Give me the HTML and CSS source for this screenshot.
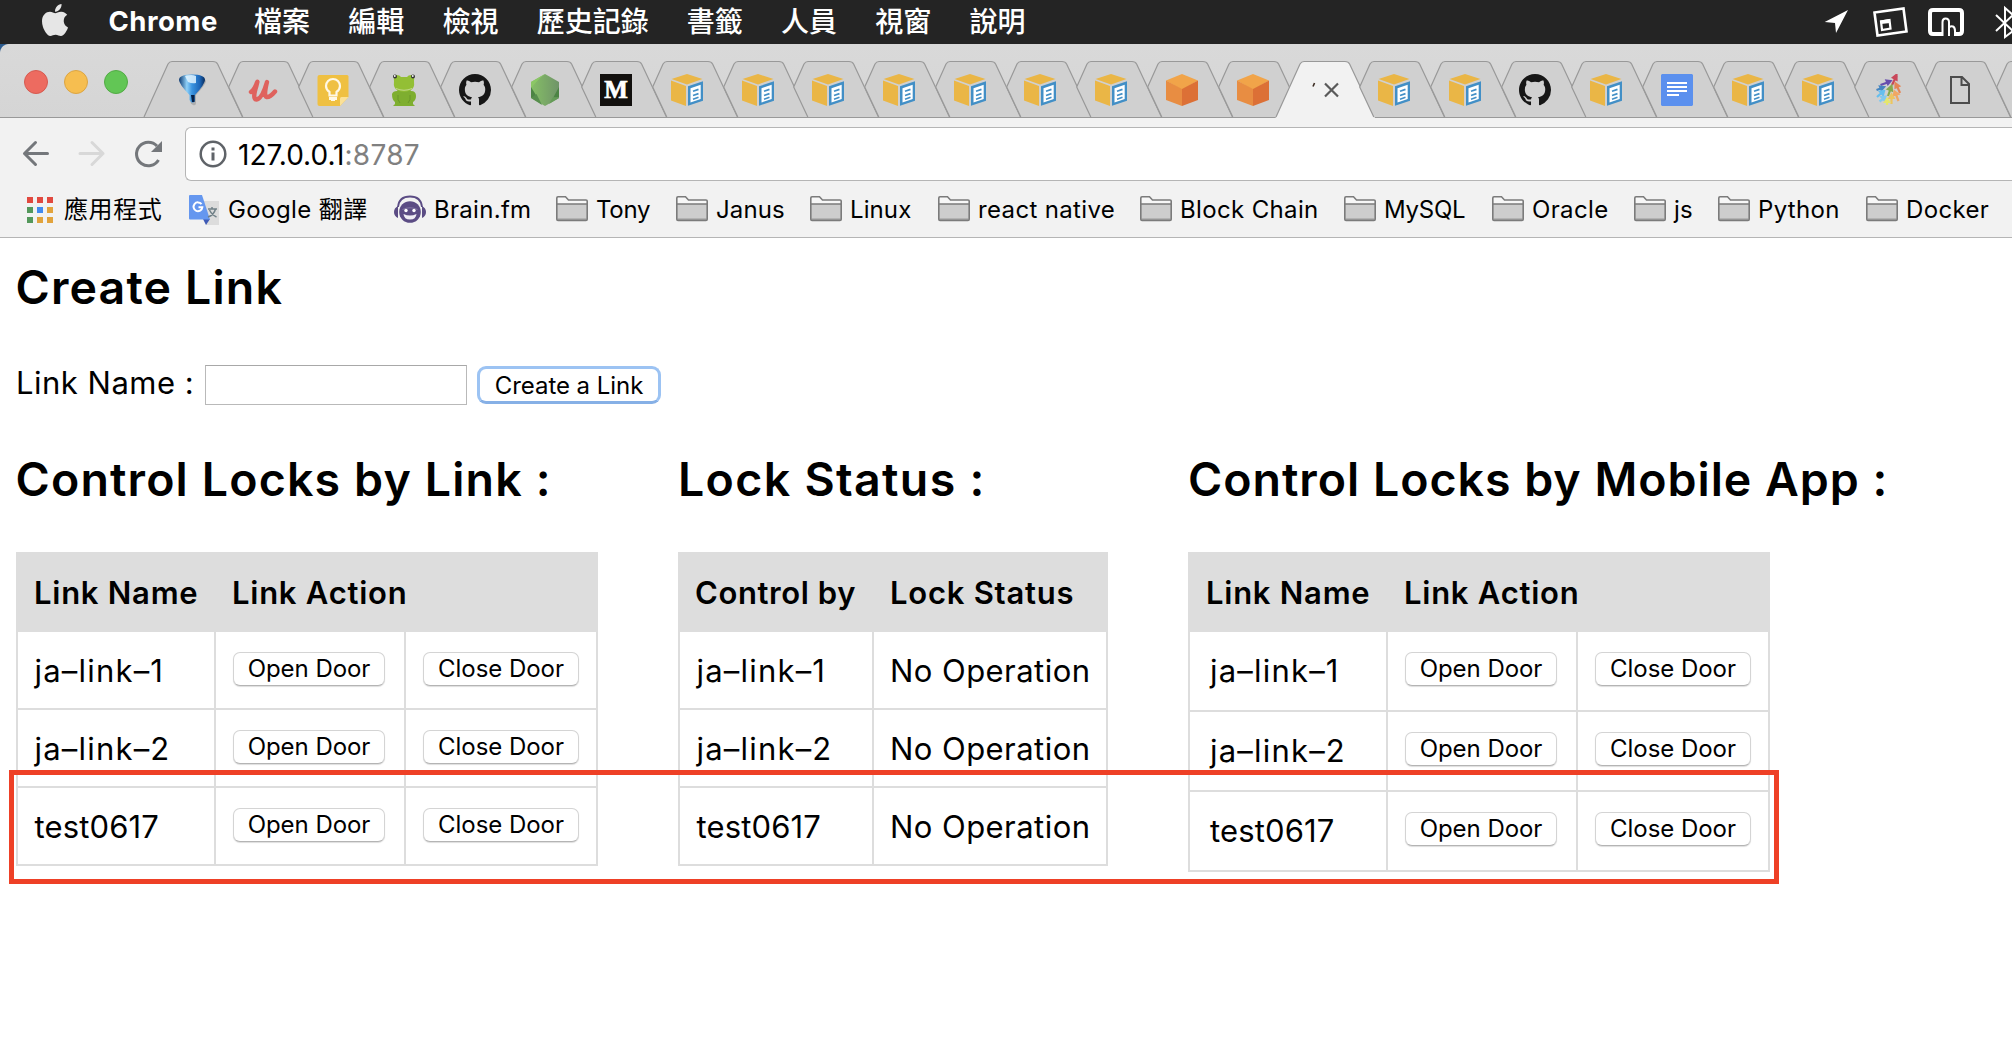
FILE: index.html
```html
<!DOCTYPE html>
<html lang="zh-Hant">
<head>
<meta charset="utf-8">
<title>Create Link</title>
<link rel="stylesheet" href="styles.css">
</head>
<body>
<svg class="defs" aria-hidden="true">
  <defs>
    <linearGradient id="blue" x1="0" x2="1"><stop offset="0" stop-color="#0d3a72"/><stop offset=".3" stop-color="#8fd0f7"/><stop offset=".5" stop-color="#3a94e0"/><stop offset=".8" stop-color="#1c66b8"/><stop offset="1" stop-color="#082c5c"/></linearGradient>
    <linearGradient id="node" x1="0" x2="1"><stop offset="0" stop-color="#86bf66"/><stop offset="1" stop-color="#6f9468"/></linearGradient>
    <symbol id="tab" viewBox="0 0 71 57" overflow="visible"><path class="tab-fill" d="M.7 26 L11 3 Q12.5 .5 15 .5 H56 Q59.3 .5 60.6 3 L85.5 56 H14.8Z"/><path class="tab-line" d="M14.8 56 L.7 26 L11 3 Q12.5 .5 15 .5 H56 Q59.3 .5 60.6 3 L85.5 56"/></symbol>
    <symbol id="tab-full" viewBox="0 0 71 57" overflow="visible"><path class="tab-fill" d="M-13 56 L11 3 Q12.5 .5 15 .5 H56 Q59.3 .5 60.6 3 L85.5 56Z"/><path class="tab-line" d="M-13 56 L11 3 Q12.5 .5 15 .5 H56 Q59.3 .5 60.6 3 L85.5 56"/></symbol>
    <symbol id="tab-active" viewBox="0 0 71 57" overflow="visible"><path fill="#f2f2f2" d="M-13.500 57 L11 3 Q12.5 .5 15 .5 H56 Q59.3 .5 60.6 3 L86 57Z"/><path class="tab-line" d="M-13 56 L11 3 Q12.5 .5 15 .5 H56 Q59.3 .5 60.6 3 L85.5 56"/></symbol>
    <symbol id="funnel" viewBox="0 0 32 32"><path d="M4 6 Q4 1.500 16 1.500 T29 6 Q29 9 19 20 V28 Q19 31 16 30 Q13.500 29 13.500 27 V20 Q4 9 4 6Z" fill="#8b8b8b" opacity=".5" transform="translate(1 1)"/><path d="M3 6 Q3 .5 16 .5 T29 6 Q29 10 19 21 V27 Q17.500 29.500 15 28 L13.500 26 V21 Q3 10 3 6Z" fill="url(#blue)"/><path d="M9 2 Q16 0 20 2 L20 9 Q16 10 12 8Z" fill="#e3f4ff" opacity=".85"/><path d="M15 21 h3.500 v7 h-2.500Z" fill="#061f45"/></symbol>
    <symbol id="script-u" viewBox="0 0 32 32"><path d="M4 18 Q8 15 10 8.500 Q11 6 9.500 11.500 Q5 25.500 9.500 25.500 Q15 25 20 8 Q16.500 22 19.500 23 Q23 23.500 28 17.500" fill="none" stroke="#df625d" stroke-width="4.400" stroke-linecap="round" stroke-linejoin="round"/></symbol>
    <symbol id="keep" viewBox="0 0 32 32"><path d="M2.500 1 H30 Q31.500 1 31.500 2.500 V23 L23 32 H2.500 Q.5 32 .5 30 V3 Q.5 1 2.500 1Z" fill="#efc042"/><path d="M23 32 V24.500 Q23 23 24.500 23 H31.500Z" fill="#fbe198"/><path d="M12.500 21.500 V18 Q9 15.500 9 12 A7 7 0 0 1 23 12 Q23 15.500 19.500 18 V21.500Z" fill="none" stroke="#fff8e6" stroke-width="2.200"/><path d="M12 23 h8 v3 h-2 v1 h-4 v-1 h-2Z" fill="#fff8e6"/></symbol>
    <symbol id="frog" viewBox="0 0 32 32"><path d="M4 20 Q5 17 9 17 L11 14 H21 L23 17 Q28 17 28 22 Q28 26 25 28 V30 L27 32 H5 L7 30 V28 Q4 26 4 20Z" fill="#7eae2f"/><path d="M6 7 Q5 1 8.500 1 T13 3 H19 Q20 1 23.500 1 T26 7 Q27 15 22 16.500 Q16 19 10 16.500 Q5 15 6 7Z" fill="#93bf35"/><path d="M8 14.500 Q16 18 24 14.500" fill="none" stroke="#c4d98e"/><circle cx="7" cy="2.500" r="2" fill="#333"/><circle cx="25" cy="2.500" r="2" fill="#333"/><circle cx="6.800" cy="2" r=".9" fill="#fff"/><circle cx="24.800" cy="2" r=".9" fill="#fff"/><path d="M10 21 Q9 26 12 29 M22 21 Q23 26 20 29" fill="none" stroke="#6a962a"/></symbol>
    <symbol id="github" viewBox="0 0 16 16"><path fill="#161616" d="M8 0C3.580 0 0 3.580 0 8c0 3.540 2.290 6.530 5.470 7.590.4.070.55-.17.55-.38 0-.19-.010-.82-.010-1.490-2.010.37-2.530-.49-2.690-.94-.090-.23-.48-.94-.82-1.130-.28-.15-.68-.52-.010-.53.63-.010 1.080.58 1.230.82.72 1.210 1.870.87 2.330.66.070-.52.28-.87.510-1.070-1.780-.2-3.640-.89-3.640-3.950 0-.87.310-1.590.82-2.150-.080-.2-.36-1.020.080-2.120 0 0 .67-.210 2.200.82.64-.18 1.320-.27 2-.27s1.360.090 2 .27c1.530-1.040 2.200-.82 2.200-.82.44 1.100.16 1.920.080 2.120.510.56.82 1.270.82 2.150 0 3.070-1.870 3.750-3.650 3.950.29.25.54.73.54 1.480 0 1.070-.010 1.930-.010 2.200 0 .210.15.46.55.38A8.010 8.010 0 0 0 16 8c0-4.420-3.580-8-8-8z"/></symbol>
    <symbol id="hex" viewBox="0 0 32 32"><path d="M16 0 L30 8 V24 L16 32 L2 24 V8Z" fill="url(#node)"/><path d="M16 0 L2 8 V14 L11 4Z" fill="#8bc765"/><path d="M2 13 L7.500 22 L2 24Z M30 13 L24 24 L30 23Z" fill="#4c8444"/><path d="M7.500 20 L13 31 L2 24Z" fill="#578e4d"/><path d="M24 23 L30 24 L20 30Z" fill="#659c58"/></symbol>
    <symbol id="awsdoc" viewBox="0 0 32 32"><path d="M16 0 L31.500 5 L16 10.500 L.5 5Z" fill="#eab646"/><path d="M0 6.500 L15 12 V32 L0 26.500Z" fill="#eab646"/><path d="M17 12.300 L32 7.300 V26.700 L17 31.700Z" fill="#428fc6"/><path d="M19.500 14.200 L29.700 10.700 V25 L19.500 28.500Z" fill="#fff"/><path d="M22 17.300 L27.500 15.400 M22 21.500 L27.500 19.600 M22 25.200 L27.500 23.300" stroke="#428fc6" stroke-width="1.700"/></symbol>
    <symbol id="awscube" viewBox="0 0 32 32"><path d="M16 0 L32 6.500 L16 16 L0 6.500Z" fill="#f1a449"/><path d="M0 6.500 L16 15 V32 L0 26Z" fill="#e88d42"/><path d="M32 6.500 L16 15 V32 L32 26Z" fill="#dc7036"/></symbol>
    <symbol id="gdoc" viewBox="0 0 32 32"><path d="M1 0 H31 L32 1 V31 L31 32 H1 L0 31 V1Z" fill="#5b90ee"/><path d="M6 9 H26 M6 13 H26 M6 17 H26 M6 21 H18" stroke="#fff" stroke-width="1.900"/></symbol>
    <symbol id="arrows" viewBox="0 0 32 32">
      <g stroke-width="2.200" fill="none" transform="translate(5 0)"><g stroke="#c9475a"><path d="M14 11 L18.500 2"/><path fill="#c9475a" d="M15 3.500 L18.500 .8 V5.500Z"/></g><g stroke="#674cae"><path d="M2.500 11 L11 8"/><path fill="#674cae" d="M8.500 6.500 L12.500 7 L10 10Z"/></g><g stroke="#4585c0"><path d="M-1.500 16 L4 14"/><path fill="#4585c0" d="M2 12.500 L6 13 L3.500 16Z"/></g><g stroke="#66bfee"><path d="M-1 23 L4 18.500"/><path fill="#66bfee" d="M2 17.500 L6 17 L5 21Z"/></g><g stroke="#83c9ee"><path d="M1.500 27.500 L5.500 24.500"/><path fill="#83c9ee" d="M3.500 23 L7.500 22.500 L6.500 26.500Z"/></g><g stroke="#85ab4e"><path d="M10 22 L12.500 15"/><path fill="#85ab4e" d="M10 15 L13.500 12 L14 16.500Z"/></g><g stroke="#e48556"><path d="M22 19 L19 12"/><path fill="#e48556" d="M17.500 13.500 L17.500 9.500 L21 12Z"/></g><g stroke="#f0a763"><path d="M20.500 27 L18 20.500"/><path fill="#f0a763" d="M16 21 L16.500 17.500 L20 20Z"/></g><g stroke="#edc461"><path d="M13.500 30 V24"/><path fill="#edc461" d="M11.500 24 L13.500 20.500 L15.500 24Z"/></g><g stroke="#e5e66f"><path d="M9 31 V28"/><path fill="#e5e66f" d="M7 28 L9 25 L11 28Z"/></g></g></symbol>
    <symbol id="page" viewBox="0 0 32 32"><path d="M7 3 H18 L25 10 V29 H7Z M17.500 3 V11 H25" fill="none" stroke="#4c4c4c" stroke-width="2"/></symbol>
    <symbol id="folder" viewBox="0 0 32 26"><path d="M1 8 V2 Q1 1 2 1 H9.500 L12.500 4 H30 Q31 4 31 5 V8Z" fill="#f7f7f7"/><path d="M1 8 H31 V23.500 Q31 24.500 30 24.500 H2 Q1 24.500 1 23.500Z" fill="#cdcdcd"/><path d="M1.500 22 H30.500 V24 H1.500Z" fill="#b3b3b3"/><path d="M.8 8 H31.200 M.8 2 Q.8 .8 2 .8 H9.500 L12.500 4 H30 Q31.200 4 31.200 5 V23.200 Q31.200 24.400 30 24.400 H2 Q.8 24.400 .8 23.200Z" fill="none" stroke="#7b7b7b" stroke-width="1.600"/></symbol>
  </defs>
</svg>

<header class="menubar">
  <svg class="apple" viewBox="4 32 376 448" preserveAspectRatio="none"><path fill="#e6e6e6" d="M318.700 268.700c-.2-36.700 16.400-64.400 50-84.800-18.800-26.900-47.200-41.700-84.700-44.600-35.500-2.800-74.300 20.700-88.500 20.700-15 0-49.400-19.700-76.400-19.700C63.300 141.200 4 184.800 4 273.500q0 39.300 14.400 81.200c12.800 36.700 59 126.700 107.200 125.200 25.200-.6 43-17.900 75.800-17.900 31.800 0 48.300 17.900 76.400 17.900 48.600-.7 90.400-82.500 102.600-119.300-65.200-30.700-61.700-90-61.700-91.900zm-56.600-164.200c27.300-32.400 24.800-61.900 24-72.500-24.100 1.400-52 16.400-67.900 34.900-17.500 19.800-27.800 44.300-25.600 71.900 26.100 2 49.900-11.400 69.500-34.300z"/></svg>
  <nav class="menus"><b class="app">Chrome</b><span>檔案</span><span>編輯</span><span>檢視</span><span>歷史記錄</span><span>書籤</span><span>人員</span><span>視窗</span><span>說明</span></nav>
  <svg class="status" viewBox="0 0 188 44" fill="none" stroke="#fff">
    <path d="M24 10 L12 33 L11 23 L.7 22Z" fill="#fff" stroke="none"/>
    <path d="M50.500 12.500 L79.500 8.500 L82.500 31.500 L53.500 35.500Z" stroke-width="2.600"/><path d="M57 21.500 L65.500 20 L66.500 28.500 L58 30Z" stroke-width="2.200"/><path d="M56 20.500 L65.500 19 L66 23 L57 24Z" fill="#fff" stroke="none"/>
    <path d="M119 34 H109 Q106 34 106 31 V13 Q106 10 109 10 H135 Q138 10 138 13 V31 Q138 34 135 34 H131" stroke-width="4"/><path d="M118.500 36 V22 Q118.500 18.500 121.500 18.500 Q125 18.500 125 22 V36 M125 28 Q126 25.500 129 26.500 Q131 27.500 131 31 V36" stroke-width="2"/>
    <path d="M172 15 L189 31 L181 37 V8 L189 15 L172 31" stroke-width="2"/>
  </svg>
</header>

<div class="tabstrip">
  <div class="lights"><i class="close"></i><i class="mini"></i><i class="max"></i></div>
  <div class="tabs">
    <div class="tab"><svg class="shape"><use href="#tab-full"/></svg><svg class="icon"><use href="#funnel"/></svg></div>
    <div class="tab"><svg class="shape"><use href="#tab"/></svg><svg class="icon"><use href="#script-u"/></svg></div>
    <div class="tab"><svg class="shape"><use href="#tab"/></svg><svg class="icon"><use href="#keep"/></svg></div>
    <div class="tab"><svg class="shape"><use href="#tab"/></svg><svg class="icon"><use href="#frog"/></svg></div>
    <div class="tab"><svg class="shape"><use href="#tab"/></svg><svg class="icon"><use href="#github"/></svg></div>
    <div class="tab"><svg class="shape"><use href="#tab"/></svg><svg class="icon"><use href="#hex"/></svg></div>
    <div class="tab"><svg class="shape"><use href="#tab"/></svg><span class="icon medium">M</span></div>
    <div class="tab"><svg class="shape"><use href="#tab"/></svg><svg class="icon"><use href="#awsdoc"/></svg></div>
    <div class="tab"><svg class="shape"><use href="#tab"/></svg><svg class="icon"><use href="#awsdoc"/></svg></div>
    <div class="tab"><svg class="shape"><use href="#tab"/></svg><svg class="icon"><use href="#awsdoc"/></svg></div>
    <div class="tab"><svg class="shape"><use href="#tab"/></svg><svg class="icon"><use href="#awsdoc"/></svg></div>
    <div class="tab"><svg class="shape"><use href="#tab"/></svg><svg class="icon"><use href="#awsdoc"/></svg></div>
    <div class="tab"><svg class="shape"><use href="#tab"/></svg><svg class="icon"><use href="#awsdoc"/></svg></div>
    <div class="tab"><svg class="shape"><use href="#tab"/></svg><svg class="icon"><use href="#awsdoc"/></svg></div>
    <div class="tab"><svg class="shape"><use href="#tab"/></svg><svg class="icon"><use href="#awscube"/></svg></div>
    <div class="tab"><svg class="shape"><use href="#tab"/></svg><svg class="icon"><use href="#awscube"/></svg></div>
    <div class="tab"><svg class="shape"><use href="#tab-active"/></svg><svg class="icon" viewBox="0 0 32 32"><path d="M7.500 9 L6 12.500" stroke="#3a2a20" stroke-width="1.600"/><path d="M18 9.500 L31 22.500 M31 9.500 L18 22.500" stroke="#5a5a5a" stroke-width="2.200"/></svg></div>
    <div class="tab"><svg class="shape"><use href="#tab"/></svg><svg class="icon"><use href="#awsdoc"/></svg></div>
    <div class="tab"><svg class="shape"><use href="#tab"/></svg><svg class="icon"><use href="#awsdoc"/></svg></div>
    <div class="tab"><svg class="shape"><use href="#tab"/></svg><svg class="icon"><use href="#github"/></svg></div>
    <div class="tab"><svg class="shape"><use href="#tab"/></svg><svg class="icon"><use href="#awsdoc"/></svg></div>
    <div class="tab"><svg class="shape"><use href="#tab"/></svg><svg class="icon"><use href="#gdoc"/></svg></div>
    <div class="tab"><svg class="shape"><use href="#tab"/></svg><svg class="icon"><use href="#awsdoc"/></svg></div>
    <div class="tab"><svg class="shape"><use href="#tab"/></svg><svg class="icon"><use href="#awsdoc"/></svg></div>
    <div class="tab"><svg class="shape"><use href="#tab"/></svg><svg class="icon"><use href="#arrows"/></svg></div>
    <div class="tab"><svg class="shape"><use href="#tab"/></svg><svg class="icon"><use href="#page"/></svg></div>
    <div class="tab"><svg class="shape"><use href="#tab"/></svg></div>
  </div>
</div>

<div class="toolbar">
  <svg class="nav" viewBox="0 0 170 56" fill="none" stroke-width="3" stroke-linecap="round" stroke-linejoin="round">
    <path d="M47.500 26.500 H24.500 M35.500 15.500 L24.500 26.500 L35.500 37.500" stroke="#74777b"/>
    <path d="M80 26.500 H103 M92 15.500 L103 26.500 L92 37.500" stroke="#d8d8d8"/>
    <path d="M158.500 33 A11.800 11.800 0 1 1 157 19" stroke="#74777b" stroke-linecap="butt"/><path d="M162 14 V25 H151Z" fill="#74777b" stroke="none"/>
  </svg>
  <div class="omnibox">
    <svg class="info" viewBox="0 0 28 28"><circle cx="14" cy="14" r="12.300" fill="none" stroke="#5f6368" stroke-width="2.500"/><path d="M12.500 7.500 h3 v3 h-3Z M12.500 12.500 h3 v8 h-3Z" fill="#5f6368"/></svg>
    <span class="host">127.0.0.1</span><span class="port">:8787</span>
  </div>
</div>

<nav class="bookmarks">
  <span class="bm apps"><svg width="28" height="28" viewBox="0 0 28 28"><path fill="#e1493f" d="M1 1h6v6H1zM11 1h6v6h-6zM21 1h6v6h-6z"/><path fill="#54985b" d="M1 11h6v6H1zM1 21h6v6H1z"/><path fill="#428af0" d="M11 11h6v6h-6z"/><path fill="#e2a33c" d="M21 11h6v6h-6zM11 21h6v6h-6zM21 21h6v6h-6z"/></svg>應用程式</span>
  <span class="bm trans"><svg width="32" height="32" viewBox="0 0 32 32"><path d="M15 7 H31 V31 H18Z" fill="#dcdcdc"/><path d="M15 25 H22 L18 31Z" fill="#3f5ab5"/><path d="M2 1 H14 L22 25.500 H2 Q1 25.500 1 24.500 V2 Q1 1 2 1Z" fill="#6597ef"/><path d="M13.500 10.200 A4.400 4.400 0 1 0 14.300 13.300 H10.500" fill="none" stroke="#fff" stroke-width="2"/><path d="M20 15 H29 M24 13 V15 M27.500 15 Q26 21 20 23 M21.500 16 Q24 21 28.500 23" fill="none" stroke="#708087" stroke-width="1.500"/></svg>Google 翻譯</span>
  <span class="bm brain"><svg width="32" height="32" viewBox="0 0 32 32"><path d="M4 13 Q5 2.500 16 2.500 T28 13" fill="none" stroke="#5b4c84" stroke-width="1.800"/><path d="M4 12 V24 Q0 22 0 18 T4 12Z M28 12 V24 Q32 22 32 18 T28 12Z" fill="#5b4c84"/><circle cx="16" cy="18" r="10.800" fill="#5b4c84"/><path d="M8.500 15.500 Q16 12 23.500 15.500" fill="none" stroke="#8d82ab" stroke-width=".8"/><circle cx="12" cy="16.500" r="1.700" fill="#fff"/><circle cx="20" cy="16.500" r="1.700" fill="#fff"/><path d="M9.500 20 Q16 23 22.500 20 Q22 25.500 16 25.500 T9.500 20Z" fill="#efedf4"/></svg>Brain.fm</span>
  <span class="bm f tight"><svg><use href="#folder"/></svg>Tony</span>
  <span class="bm f"><svg><use href="#folder"/></svg>Janus</span>
  <span class="bm f"><svg><use href="#folder"/></svg>Linux</span>
  <span class="bm f wide"><svg><use href="#folder"/></svg>react native</span>
  <span class="bm f wide"><svg><use href="#folder"/></svg>Block Chain</span>
  <span class="bm f tight"><svg><use href="#folder"/></svg>MySQL</span>
  <span class="bm f wide"><svg><use href="#folder"/></svg>Oracle</span>
  <span class="bm f"><svg><use href="#folder"/></svg>js</span>
  <span class="bm f wide"><svg><use href="#folder"/></svg>Python</span>
  <span class="bm f wide"><svg><use href="#folder"/></svg>Docker</span>
</nav>

<main>
  <h2>Create Link</h2>
  <form class="create">
    <label for="name">Link Name :</label>
    <input id="name" type="text">
    <button type="button" class="focus">Create a Link</button>
  </form>
  <div class="columns">
    <section>
      <h2>Control Locks by Link :</h2>
      <table class="actions">
        <tr><th class="c1">Link Name</th><th class="c2">Link Action</th><th class="c3"></th></tr>
        <tr><td class="name">ja–link–1</td><td><button class="open">Open Door</button></td><td><button class="shut">Close Door</button></td></tr>
        <tr><td class="name">ja–link–2</td><td><button class="open">Open Door</button></td><td><button class="shut">Close Door</button></td></tr>
        <tr><td class="name num">test0617</td><td><button class="open">Open Door</button></td><td><button class="shut">Close Door</button></td></tr>
      </table>
    </section>
    <section>
      <h2 class="lock">Lock Status :</h2>
      <table>
        <tr><th class="s1">Control by</th><th class="s2">Lock Status</th></tr>
        <tr><td class="name">ja–link–1</td><td class="op">No Operation</td></tr>
        <tr><td class="name">ja–link–2</td><td class="op">No Operation</td></tr>
        <tr><td class="name num">test0617</td><td class="op">No Operation</td></tr>
      </table>
    </section>
    <section>
      <h2 class="mobile">Control Locks by Mobile App :</h2>
      <table class="actions roomy">
        <tr><th class="c1">Link Name</th><th class="c2">Link Action</th><th class="c3"></th></tr>
        <tr><td class="name">ja–link–1</td><td><button class="open">Open Door</button></td><td><button class="shut">Close Door</button></td></tr>
        <tr><td class="name">ja–link–2</td><td><button class="open">Open Door</button></td><td><button class="shut">Close Door</button></td></tr>
        <tr><td class="name num">test0617</td><td><button class="open">Open Door</button></td><td><button class="shut">Close Door</button></td></tr>
      </table>
    </section>
  </div>
</main>
<div class="highlight"></div>
</body>
</html>
```
FILE: styles.css
```css
* { box-sizing: border-box; }
body {
  margin: 0;
  width: 2012px;
  height: 1056px;
  overflow: hidden;
  position: relative;
  background: #fff;
  color: #000;
  font-family: Inter, "Noto Sans CJK TC", sans-serif;
}
svg { display: block; flex: none; }
.defs { position: absolute; width: 0; height: 0; }

/* System menu bar */
.menubar {
  display: flex;
  align-items: center;
  height: 44px;
  padding-left: 42px;
  background: #242424;
  color: #fff;
}
.apple { width: 26px; height: 32px; margin-top: -4px; }
.menus { display: flex; gap: 38.2px; margin-left: 40.5px; font-size: 28px; font-weight: 500; line-height: 46px; white-space: nowrap; }
.app { font-size: 27.5px; font-weight: 700; letter-spacing: .5px; margin-right: -2px; line-height: 44px; }
.status { width: 188px; height: 44px; margin-left: auto; }

/* Tab strip */
.tabstrip {
  display: flex;
  height: 74px;
  background: radial-gradient(circle at 9px 9px, #d8d8d8 8.5px, #2c5b8e 9.5px) 0 0 / 9px 9px no-repeat, linear-gradient(#d9d9d9, #d5d5d5);
  border-bottom: 1px solid #999;
}
.lights { display: flex; gap: 16px; width: 157px; padding: 26px 0 0 24px; flex: none; }
.lights i { width: 24px; height: 24px; border-radius: 50%; border: 1px solid; }
.lights .close { background: #ed6b60; border-color: #d65a50; }
.lights .mini { background: #f6be50; border-color: #dca543; }
.lights .max { background: #62c655; border-color: #52ab45; }
.tabs { display: flex; padding-top: 17px; }
.tab { display: grid; width: 70.73px; height: 57px; flex: none; }
.tab > * { grid-area: 1 / 1; }
.shape { width: 71px; height: 57px; overflow: visible; }
.tab-fill { fill: #d0d0d0; }
.tab-line { fill: none; stroke: #999; stroke-width: 1.2; }
.icon { width: 32px; height: 32px; margin: 13px 0 0 18.8px; }
.medium { background: #12100e; color: #fff; font: 700 25px/32px "Liberation Serif", serif; text-align: center; -webkit-text-stroke: .7px #fff; }

/* Navigation toolbar */
.toolbar { display: flex; height: 64px; padding-top: 9px; background: #f2f2f2; }
.nav { width: 170px; height: 56px; }
.omnibox {
  display: flex;
  align-items: center;
  flex: 1;
  height: 54px;
  margin-left: 15px;
  padding-left: 13px;
  background: #fff;
  border: 1px solid #b5b5b5;
  border-right: 0;
  border-radius: 6px 0 0 6px;
  font-size: 28px;
  line-height: 34px;
}
.info { width: 28px; height: 28px; margin-right: 11px; }
.host { letter-spacing: 0; padding-top: 2px; }
.port { letter-spacing: .3px; padding-top: 2px; color: #808080; }

/* Bookmarks */
.bookmarks {
  display: grid;
  grid-template-columns: 162px 206px 162px 120px 134px 128px 202px 204px 148px 142px 84px 148px 146px;
  align-items: center;
  height: 56px;
  padding-left: 26px;
  overflow: hidden;
  background: #f2f2f2;
  border-bottom: 1px solid #b5b5b5;
  font-size: 24px;
  line-height: 55px;
  white-space: nowrap;
}
.bm { display: flex; align-items: center; gap: 8px; letter-spacing: .1px; }
.apps { gap: 10px; letter-spacing: .6px; }
.trans { letter-spacing: .4px; }
.brain { letter-spacing: .3px; }
.bm.f svg { width: 32px; height: 26px; margin-top: -2px; }
.bm.tight { letter-spacing: -.25px; }
.bm.wide { letter-spacing: .35px; }

/* Page content */
main { padding: 21px 0 0 16px; }
h2 { margin: 0 0 0 -.5px; font-size: 46.5px; font-weight: 560; line-height: 56px; letter-spacing: 1.15px; white-space: nowrap; }
h2.lock { letter-spacing: 1.33px; margin-left: 0; }
h2.mobile { letter-spacing: .98px; margin-left: 0; }
.create { display: flex; align-items: center; height: 40px; margin-top: 50px; }
.create label { width: 189px; padding-bottom: 5px; font-size: 31px; letter-spacing: .5px; white-space: nowrap; }
.create input { width: 262px; height: 40px; border: 1px solid #b9b9b9; border-top-color: #a8a8a8; }
button {
  display: block;
  height: 34px;
  padding: 0;
  border: 1px solid #d4d4d4;
  border-bottom-color: #b4b4b4;
  border-radius: 7px;
  box-shadow: 0 1px 1px #0002;
  background: #fff;
  color: #000;
  font: 400 24px/32px Inter, sans-serif;
  letter-spacing: -.05px;
}
.focus {
  width: 184px;
  height: 38px;
  margin-left: 10px;
  padding-top: 1px;
  border: 3px solid #9cc3f3;
  border-bottom-color: #86b0e6;
  border-radius: 9px;
  box-shadow: none;
}
.columns { display: grid; grid-template-columns: 662px 510px auto; margin-top: 46px; }
table { margin-top: 45px; border: 2px solid #ddd; border-width: 2px 0 0 2px; border-spacing: 0; }
.actions { width: 582px; table-layout: fixed; }
th, td { height: 78px; padding: 1px 0 0 17px; border: 2px solid #ddd; border-width: 0 2px 2px 0; font-size: 31px; line-height: 38px; text-align: left; white-space: nowrap; }
th { padding: 1px 0 0 16px; background: #ddd; font-weight: 560; letter-spacing: .75px; }
.c1 { width: 198px; }
.c2 { width: 190px; }
.c3 { width: 192px; }
.s1 { width: 194px; padding-left: 15px; letter-spacing: .6px; }
.s2 { width: 234px; }
td.name { padding-left: 16.5px; letter-spacing: 1.2px; }
td.num { letter-spacing: .15px; }
td.op { padding-left: 16px; letter-spacing: .45px; }
td button { margin-bottom: 3px; }
.open { width: 152px; }
.shut { width: 156px; }
.roomy td { height: 80px; padding-top: 0; }
.roomy td.name { padding-left: 20px; }
.roomy td button { margin-bottom: 4px; }

/* Annotation box over the last table row */
.highlight { position: absolute; left: 9px; top: 770px; width: 1770px; height: 114px; border: 5px solid #ee4026; }
```
